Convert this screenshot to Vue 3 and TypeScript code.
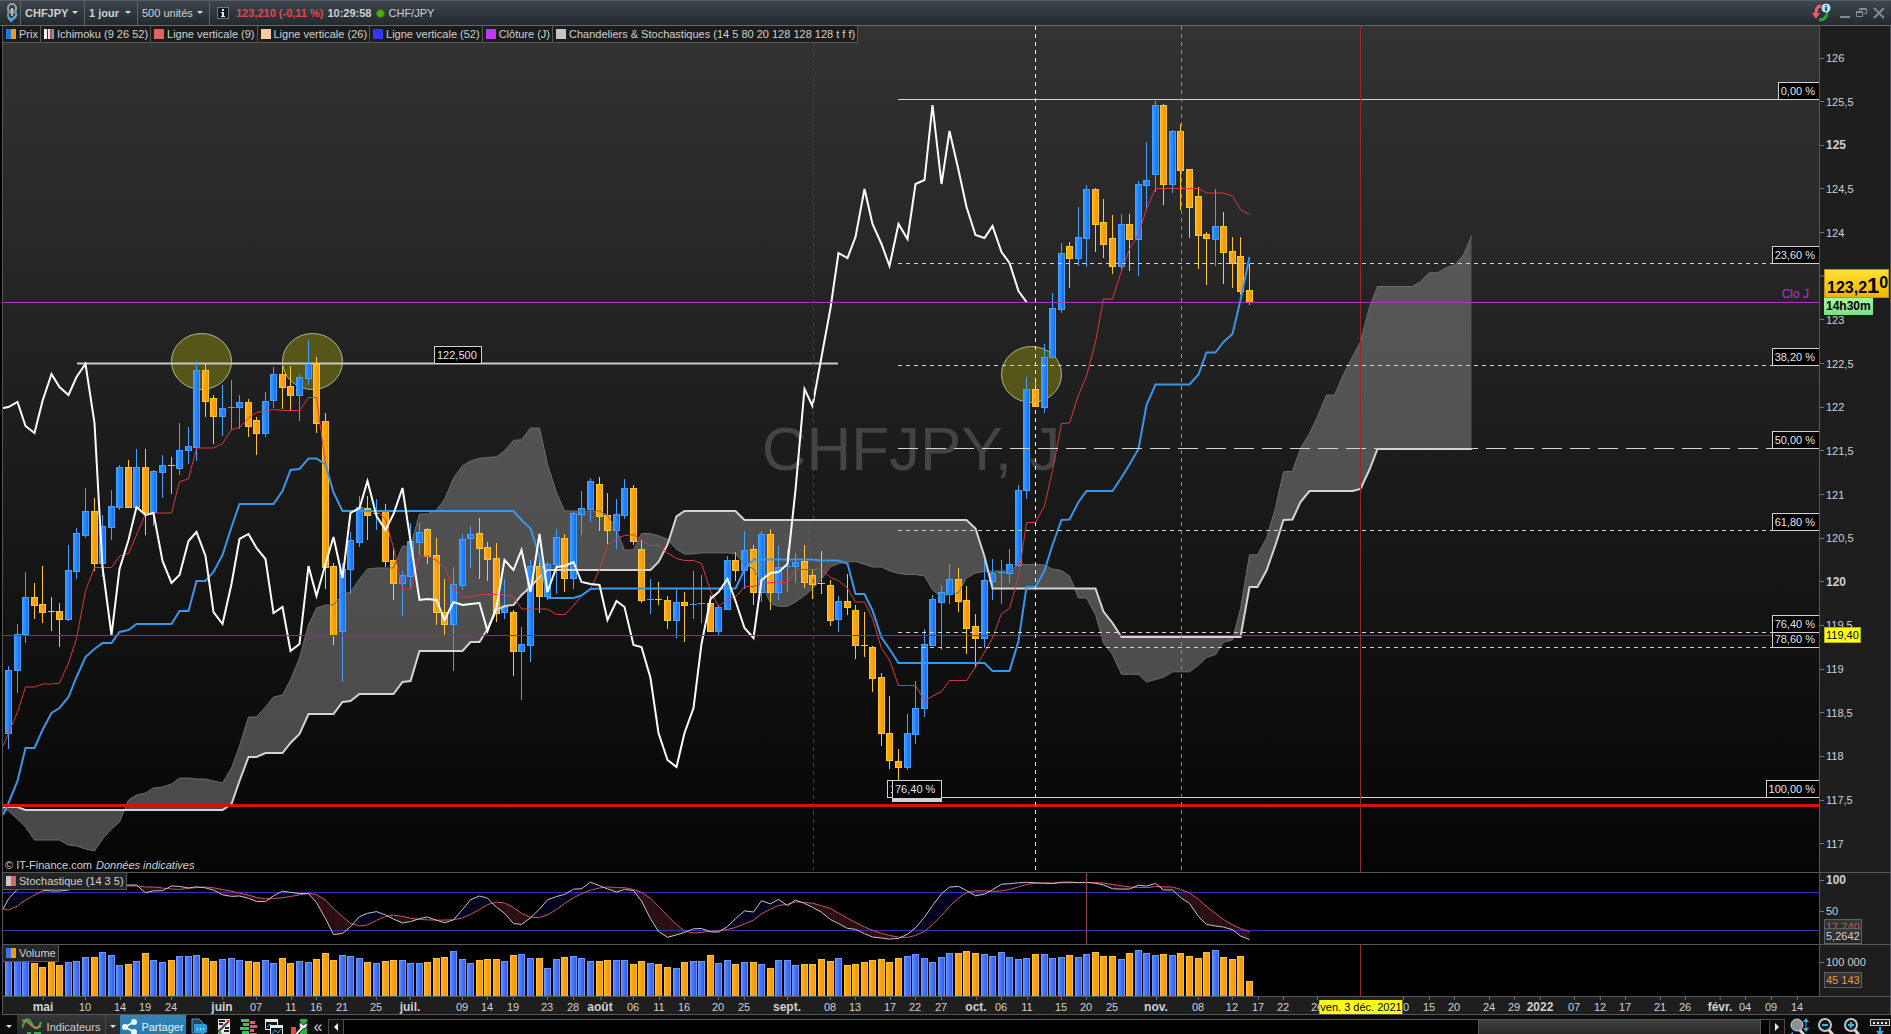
<script setup lang="ts">
type Candle = { x: number; up: boolean; top: number; bottom: number; high: number; low: number }
type Pt = [number, number]

const PITCH = 8.558
const FIRST = 8.5
const slot = (i: number): number => Math.floor(FIRST + PITCH * i) + 0.5

/* One session per entry: direction (1 = up), body top, body bottom, high, low, in canvas units */
const sessions: number[][] = [
  [1,670,733,666,749],[1,634,670,624,693],[1,597,634,572,643],[0,597,605,583,619],[0,604,612,566,623],
  [0,611,613,597,631],[0,611,619,603,647],[1,570,619,545,621],[1,533,571,528,579],[1,511,535,488,538],
  [0,511,563,498,571],[1,526,563,515,577],[1,506,527,490,540],[1,467,507,465,510],[0,467,507,460,507],
  [1,467,507,449,508],[0,467,512,449,535],[1,471,512,470,526],[1,465,472,455,498],[0,465,467,457,494],
  [1,450,468,423,475],[1,446,450,427,464],[1,370,447,361,461],[0,370,401,364,417],[0,398,416,395,444],
  [1,408,416,385,436],[1,407,408,380,430],[1,402,407,395,429],[0,402,426,399,437],[0,420,433,417,455],
  [1,401,433,392,437],[1,374,400,367,408],[0,374,387,366,409],[0,386,395,366,411],[1,377,395,374,421],
  [1,364,378,340,385],[0,364,423,357,433],[0,421,567,413,589],[0,566,635,563,645],[1,569,631,563,682],
  [1,540,569,532,594],[1,507,542,496,547],[0,508,515,496,540],[1,513,515,499,530],[0,511,561,504,567],
  [0,560,583,547,600],[1,575,583,571,616],[1,541,576,523,590],[1,532,542,523,555],[0,529,556,528,564],
  [0,555,612,538,625],[0,612,624,579,636],[1,584,624,567,671],[1,539,585,534,590],[1,534,538,526,568],
  [0,533,548,518,579],[0,547,559,542,581],[0,558,613,543,622],[1,607,612,579,619],[0,612,651,610,676],
  [1,644,651,627,700],[1,566,645,560,662],[0,566,596,557,613],[1,564,596,562,600],[1,537,564,529,594],
  [0,538,578,534,592],[1,513,578,512,589],[1,508,514,491,535],[1,481,509,478,522],[0,484,516,477,531],
  [0,515,530,493,544],[1,514,530,499,549],[1,488,515,479,519],[0,488,541,485,545],[0,549,600,540,603],
  [1,599,600,579,614],[0,599,600,582,605],[0,600,620,596,629],[1,602,620,588,638],[0,602,605,592,642],
  [1,604,605,571,619],[1,603,605,575,623],[0,603,631,595,632],[1,607,631,605,636],[1,560,609,556,610],
  [0,560,570,552,581],[1,550,570,531,589],[0,549,592,545,605],[1,534,592,531,602],[0,534,592,529,610],
  [1,567,592,546,600],[1,566,568,549,592],[1,562,566,553,583],[0,561,582,545,588],[0,575,584,570,599],
  [0,583,585,551,594],[0,585,620,580,626],[1,601,619,596,632],[0,601,607,574,615],[0,610,645,605,659],
  [0,645,647,612,657],[0,647,678,646,692],[0,677,733,673,746],[0,733,760,696,769],[0,761,767,749,797],
  [1,733,767,714,770],[1,708,734,681,744],[1,644,708,629,717],[1,599,645,595,646],[1,592,602,586,650],
  [1,579,594,564,604],[0,579,601,568,612],[0,600,628,586,654],[0,626,638,614,668],[1,580,638,560,648],
  [1,573,581,559,600],[1,572,574,560,604],[1,564,573,549,583],[1,490,565,485,567],[1,389,490,377,499],
  [0,389,406,378,407],[1,357,407,344,413],[1,308,357,293,357],[1,253,309,243,313],[0,246,258,242,288],
  [1,237,258,207,266],[1,189,238,185,267],[0,189,224,188,252],[0,222,244,199,258],[0,238,266,215,274],
  [1,224,266,214,270],[0,224,239,214,271],[1,184,239,181,276],[1,180,185,142,210],[1,105,174,101,192],
  [0,105,184,104,205],[1,131,184,130,193],[0,131,170,124,210],[0,169,207,169,238],[0,196,235,187,269],
  [0,234,238,232,285],[1,226,239,189,266],[0,226,252,212,284],[0,251,263,237,288],[0,256,291,237,295],
  [0,290,302,264,305],
]

const candles: Candle[] = sessions.map((s, i) => ({
  x: slot(i), up: s[0] === 1, top: s[1], bottom: s[2], high: s[3], low: s[4],
}))
const closes = candles.map((c) => (c.up ? c.top : c.bottom))

function middle(i: number, period: number): number {
  const part = candles.slice(i - period + 1, i + 1)
  return (Math.min(...part.map((c) => c.high)) + Math.max(...part.map((c) => c.low))) / 2
}

/* Values that precede the visible sessions are given, the rest is derived */
const tenkanSeed = [733,712,687,687,684,684,683,663]
const kijunSeed = [803,781,748,748,730,713,708,697,677,657,649,643,643,632,630,624,624,624,624,624,611,611,581,581,572]
const spanASeed = [811,819,827,840,840,840,840,845,846,849,851,839,829,822,800,795,793,788,787,784,778,778,779,779,781,783,768,746,717,717,707,697,695,680,658,625,608,605,605,594,592,579,569,568,568,568,546,546,514,514,510]
const spanBSeed = [807,807,810,810,810,810,810,810,810,810,810,810,810,810,810,810,810,810,810,810,810,810,810,810,810,810,804,781,757,757,753,753,753,743,734,714,714,714,714,702,701,694,694,694,694,694,682,681,651,651,651,651,651,651,642,642,629,610,606,605,595,587,577,570,570,570,570,570,570,570,570,570,570,570,570,570,562]

const tenkan = candles.map((_, i) => (i < 8 ? tenkanSeed[i] : middle(i, 9)))
const kijun = candles.map((_, i) => (i < 25 ? kijunSeed[i] : middle(i, 26)))
const SHIFT = 26
const spanA: number[] = []
const spanB: number[] = []
for (let i = 0; i < candles.length + SHIFT; i++) {
  const j = i - SHIFT
  spanA.push(i < 51 ? spanASeed[i] : (tenkan[j] + kijun[j]) / 2)
  spanB.push(i < 77 ? spanBSeed[i] : middle(j, 52))
}

const toPoints = (v: number[], lead?: number): Pt[] => {
  const pts = v.map((y, i): Pt => [slot(i), y])
  return lead === undefined ? pts : [[3, lead], ...pts]
}
const join = (p: Pt[]): string => p.map(([x, y]) => `${x},${y.toFixed(1)}`).join(' ')

const tenkanLine = join(toPoints(tenkan, 746))
const kijunLine = join(toPoints(kijun, 815))
const spanALine = join(toPoints(spanA, 809))
const spanBLine = join(toPoints(spanB, 807))
const cloud = join([...toPoints(spanA, 809), ...toPoints(spanB, 807).reverse()])
const chikouLine = join(toPoints(closes.slice(SHIFT), 408))

/* Stochastic 14 3 5 */
const STO_TOP = 880
const STO_SPAN = 63
const rawK = candles.map((_, i) => {
  const part = candles.slice(Math.max(0, i - 13), i + 1)
  const hi = Math.min(...part.map((c) => c.high))
  const lo = Math.max(...part.map((c) => c.low))
  return (lo - closes[i]) / (lo - hi)
})
const mean = (v: number[]): number => v.reduce((a, b) => a + b, 0) / v.length
const kSeed = [899,889,885,886,890,891,891,890,888,886,885,884,885,885,885,885]
const dSeed = [910,906,900,895,891,889,888,888,888,888,887,886,886,886,886,886,887,887,888,889]
const slowK = candles.map((_, i) => (i < 16 ? kSeed[i] : STO_TOP + STO_SPAN * (1 - mean(rawK.slice(i - 2, i + 1)))))
const slowD = candles.map((_, i) => (i < 20 ? dSeed[i] : mean(slowK.slice(i - 4, i + 1))))
const kLine = join(toPoints(slowK, 909))
const dLine = join(toPoints(slowD, 909))
const stoBands = candles.slice(1).map((_, n) => {
  const i = n + 1
  return {
    up: slowK[i] + slowK[n] < slowD[i] + slowD[n],
    points: join([[slot(n), slowK[n]], [slot(i), slowK[i]], [slot(i), slowD[i]], [slot(n), slowD[n]]]),
  }
})

const volumes: number[] = [
  36,36,35,33,29,34,31,34,35,39,39,44,41,31,32,35,43,36,34,36,40,40,41,38,35,37,38,36,35,34,36,33,38,33,35,34,37,43,36,41,
  40,38,34,33,35,36,36,33,33,34,38,39,45,37,33,36,37,37,35,41,42,38,38,28,37,39,40,38,35,35,36,36,36,32,35,33,32,29,28,34,
  35,35,41,33,36,32,34,34,32,28,36,36,31,32,32,37,35,38,31,32,34,36,37,34,38,40,42,38,34,39,43,43,45,43,42,40,44,39,37,38,
  42,42,38,39,41,39,42,44,40,40,37,43,46,43,41,42,41,43,40,38,44,46,39,37,40,15,
]

const legend = [
  { text: 'Prix', cls: 'sw-price' },
  { text: 'Ichimoku (9 26 52)', cls: 'sw-ichi' },
  { text: 'Ligne verticale (9)', cls: 'sw-red' },
  { text: 'Ligne verticale (26)', cls: 'sw-peach' },
  { text: 'Ligne verticale (52)', cls: 'sw-blue' },
  { text: 'Clôture (J)', cls: 'sw-violet' },
  { text: 'Chandeliers & Stochastiques (14 5 80 20 128 128 128 t f f)', cls: 'sw-grey' },
]

const topOf = (y: number): { top: string } => ({ top: `${((y - 26) / 846) * 100}%` })
const leftOf = (x: number): { left: string } => ({ left: `${((x - 3) / 1816) * 100}%` })
const at = (x: number, y: number) => ({ ...leftOf(x), ...topOf(y) })

const prices = Array.from({ length: 19 }, (_, n) => 126 - n / 2).map((p) => ({
  label: String(p).replace('.', ','),
  y: 58 + (126 - p) * 87.3,
  major: p % 5 === 0,
  hidden: p === 123.5,
}))

const levels = [
  { y: 99.5, label: '0,00 %', dash: '' },
  { y: 263.5, label: '23,60 %', dash: '4 4' },
  { y: 365.5, label: '38,20 %', dash: '4 4' },
  { y: 448.5, label: '50,00 %', dash: '20 8' },
  { y: 530.5, label: '61,80 %', dash: '4 4' },
  { y: 647.5, label: '78,60 %', dash: '4 4' },
  { y: 632.5, label: '76,40 %', dash: '4 4' },
  { y: 797.5, label: '100,00 %', dash: '' },
]

const dates: [string, number][] = [
  ['mai', 43], ['10', 85], ['14', 120], ['19', 145], ['24', 171], ['juin', 222], ['07', 256], ['11', 291], ['16', 316],
  ['21', 342], ['25', 376], ['juil.', 410], ['09', 462], ['14', 487], ['19', 513], ['23', 547], ['28', 573], ['août', 600],
  ['06', 633], ['11', 659], ['16', 684], ['20', 718], ['25', 744], ['sept.', 787], ['08', 830], ['13', 855], ['17', 890],
  ['22', 915], ['27', 941], ['oct.', 976], ['06', 1001], ['11', 1027], ['15', 1061], ['20', 1086], ['25', 1112], ['nov.', 1156],
  ['08', 1198], ['12', 1232], ['17', 1258], ['22', 1283], ['26', 1317], ['10', 1403], ['15', 1429], ['20', 1454], ['24', 1489],
  ['29', 1514], ['2022', 1540], ['07', 1574], ['12', 1600], ['17', 1625], ['21', 1660], ['26', 1685], ['févr.', 1720],
  ['04', 1745], ['09', 1771], ['14', 1797],
]
const isMajor = (t: string): boolean => t.length > 2
</script>

<template>
  <div class="app">
    <header class="toolbar">
      <button class="tool link" aria-label="Lier">
        <svg width="14" height="20" viewBox="0 0 14 20" fill="none">
          <rect x="3" y="1" width="8" height="9" rx="4" stroke="#9aa0a4" stroke-width="2" />
          <rect x="3" y="7" width="8" height="9" rx="4" stroke="#85898c" stroke-width="2" />
          <path d="M7 5v8" stroke="#b8bcbe" stroke-width="2" />
          <path d="M3 14l3 4 6-7" stroke="#3db4e8" stroke-width="2" />
        </svg>
      </button>
      <div class="pick w-symbol strong">
        <select aria-label="Valeur"><option>CHFJPY</option></select>
        <svg width="6" height="4" viewBox="0 0 6 4"><path d="M0 0h6L3 3z" fill="#d5d8da" /></svg>
      </div>
      <div class="pick w-unit strong">
        <select aria-label="Unité de temps"><option>1 jour</option></select>
        <svg width="6" height="4" viewBox="0 0 6 4"><path d="M0 0h6L3 3z" fill="#d5d8da" /></svg>
      </div>
      <div class="pick w-count">
        <select aria-label="Nombre d'unités"><option>500 unités</option></select>
        <svg width="6" height="4" viewBox="0 0 6 4"><path d="M0 0h6L3 3z" fill="#d5d8da" /></svg>
      </div>
      <div class="quote">
        <svg width="12" height="12" viewBox="0 0 12 12">
          <rect x=".5" y=".5" width="11" height="11" fill="#191c1e" stroke="#70767a" />
          <path d="M5 2h2v2H5zM4 5h3v4h1v1H4V9h1V6H4z" fill="#e4e6e7" />
        </svg>
        <strong class="change">123,210 (-0,11 %)</strong>
        <strong>10:29:58</strong>
        <span class="dot"></span>
        <span>CHF/JPY</span>
      </div>
      <div class="window">
        <button class="refresh" aria-label="Actualiser">
          <svg width="20" height="20" viewBox="0 0 20 20" fill="none">
            <path d="M9 3C5 3 4 6 4 10" stroke="#f0636c" stroke-width="3" />
            <path d="M0 10h8l-4 6z" fill="#ee5660" />
            <path d="M7 17c6 0 8-3 8-8" stroke="#2f9e3c" stroke-width="3" />
            <circle cx="14" cy="5" r="4" fill="#a9d8f5" stroke="#dff2fd" />
            <path d="M14 2v1M14 4v4" stroke="#1b5d93" stroke-width="2" />
          </svg>
        </button>
        <button aria-label="Réduire">
          <svg width="10" height="12" viewBox="0 0 10 12"><path d="M0 9h10v2H0z" fill="#85898c" /></svg>
        </button>
        <button aria-label="Restaurer">
          <svg width="11" height="12" viewBox="0 0 11 12" fill="none" stroke="#85898c" stroke-width="1">
            <path d="M3.500 3.500v-2h7v5h-3M.5 4.500h6v5h-6zM.5 5.500h6M3.500 2.500h7" />
          </svg>
        </button>
        <button aria-label="Fermer">
          <svg width="12" height="12" viewBox="0 0 12 12"><path d="M1 1l10 10M11 1L1 11" stroke="#85898c" stroke-width="2" /></svg>
        </button>
      </div>
    </header>

    <main class="board">
      <section class="pane">
        <div class="plot price-plot">
          <div class="watermark">CHFJPY, J</div>
          <svg class="chart" viewBox="3 26 1816 846" preserveAspectRatio="none">
            <defs>
              <linearGradient id="up"><stop offset="0" stop-color="#3d9cff" /><stop offset="1" stop-color="#0f6cf5" /></linearGradient>
              <linearGradient id="down"><stop offset="0" stop-color="#ffae20" /><stop offset="1" stop-color="#f09400" /></linearGradient>
            </defs>
            <polygon :points="cloud" fill="#808080" fill-opacity=".55" />
            <g class="marks">
              <ellipse cx="201.5" cy="361.5" rx="30" ry="28" />
              <ellipse cx="312.5" cy="361.5" rx="30" ry="28" />
              <ellipse cx="1031.5" cy="374.5" rx="30" ry="28" />
            </g>
            <path d="M77 363.500H838" stroke="#c8c8c4" stroke-width="2" />
            <g shape-rendering="crispEdges">
              <g v-for="(c, i) in candles" :key="i" :class="c.up ? 'up' : 'down'">
                <path :d="`M${c.x} ${c.high}V${c.low}`" />
                <rect v-if="c.bottom - c.top > 2" :x="c.x - 3" :y="c.top + 0.5" width="6" :height="c.bottom - c.top" />
                <path v-else :d="`M${c.x - 3.5} ${c.top + 0.5}h7`" />
              </g>
            </g>
            <polyline :points="spanALine" fill="none" stroke="#6c6c6c" />
            <polyline :points="spanBLine" fill="none" stroke="#d4d4d4" stroke-width="2" />
            <polyline :points="tenkanLine" fill="none" stroke="#d8383e" />
            <polyline :points="kijunLine" fill="none" stroke="#3b96ea" stroke-width="2" />
            <polyline :points="chikouLine" fill="none" stroke="#fff" stroke-width="2" />
            <path
              v-for="l in levels" :key="l.label" :d="`M898 ${l.y}H1819`" stroke="#d2d2d2"
              :stroke-dasharray="l.dash || undefined"
            />
            <path d="M3 635.500H1819" stroke="#9c3434" />
            <path d="M3 302.500H1819" stroke="#a63cc0" />
            <path d="M3 805.500H1819" stroke="#dc0f0f" stroke-width="3" />
            <g stroke-dasharray="4 4">
              <path d="M813.500 43V870" stroke="#3a30d0" />
              <path d="M1035.500 26V870" stroke="#ffe8b8" />
              <path d="M1181.500 26V870" stroke="#c87860" />
            </g>
            <path d="M1360.500 26V872" stroke="#8a2e2e" />
          </svg>
          <ul class="legend">
            <li v-for="l in legend" :key="l.text"><i :class="l.cls"></i>{{ l.text }}</li>
          </ul>
          <span v-for="l in levels" :key="l.label" class="level right" :style="topOf(l.y + 0.5)">{{ l.label }}</span>
          <span class="level" :style="at(434, 364)">122,500</span>
          <span class="level" :style="at(887, 798)">117,450</span>
          <span class="level base" :style="at(892, 802)">76,40 %</span>
          <span class="close-label" :style="topOf(301)">Clo J</span>
          <p class="credit">© IT-Finance.com <em>Données indicatives</em></p>
        </div>
        <div class="axis">
          <span
            v-for="p in prices" :key="p.label" class="tick" :class="{ major: p.major }" :style="topOf(p.y)"
          >{{ p.hidden ? '' : p.label }}</span>
          <div class="last" :style="topOf(269)">
            <strong class="last-price"><span>123,2</span><span class="big">1</span><span class="sup">0</span></strong>
            <strong class="countdown">14h30m</strong>
          </div>
          <span class="cursor-price" :style="topOf(635)">119,40</span>
        </div>
      </section>

      <section class="pane">
        <div class="plot">
          <svg class="chart" viewBox="3 873 1816 71" preserveAspectRatio="none">
            <polygon v-for="(b, i) in stoBands" :key="i" :points="b.points" :fill="b.up ? '#04041f' : '#2c1013'" />
            <path d="M3 892.500H1819M3 930.500H1819" stroke="#3634b4" />
            <polyline :points="dLine" fill="none" stroke="#c85a5c" />
            <polyline :points="kLine" fill="none" stroke="#c4c4c8" />
            <path d="M1086.500 873V944" stroke="#9c3c3c" />
          </svg>
          <span class="title"><i class="sw-sto"></i>Stochastique (14 3 5)</span>
        </div>
        <div class="axis">
          <span class="tick major at-100">100</span>
          <span class="tick at-50">50</span>
          <span class="box box-d">17,740</span>
          <span class="box box-k">5,2642</span>
        </div>
      </section>

      <section class="pane">
        <div class="plot">
          <svg class="chart" viewBox="3 945 1816 51" preserveAspectRatio="none">
            <defs>
              <linearGradient id="volUp"><stop offset="0" stop-color="#5c8cff" /><stop offset="1" stop-color="#2c58e8" /></linearGradient>
            </defs>
            <g shape-rendering="crispEdges">
              <g v-for="(v, i) in volumes" :key="i" :class="candles[i].up ? 'vol-up' : 'vol-down'">
                <rect :x="slot(i) - 3" :y="996.5 - v" width="6" :height="v" />
              </g>
            </g>
            <path d="M1360.500 945V996" stroke="#8a2e2e" />
          </svg>
          <span class="title"><i class="sw-vol"></i>Volume</span>
        </div>
        <div class="axis">
          <span class="tick at-vol">100 000</span>
          <span class="box box-v">45 143</span>
        </div>
      </section>

      <section class="dates">
        <div class="date-strip">
          <span
            v-for="([t, x], i) in dates" :key="i" class="date" :class="{ major: isMajor(t) }" :style="leftOf(x)"
          >{{ t }}</span>
          <span class="cursor-date" :style="leftOf(1361)">ven. 3 déc. 2021</span>
        </div>
      </section>
    </main>

    <footer class="bottom">
      <button class="mini" aria-label="Menu">
        <svg width="6" height="4" viewBox="0 0 6 4"><path d="M0 0h6L3 3z" fill="#e0e0e0" /></svg>
      </button>
      <button class="indicators">
        <svg width="20" height="20" viewBox="0 0 20 20" fill="none">
          <path d="M0 11C4-1 7 1 10 7s6 6 9-2" stroke="#34b44a" stroke-width="2" />
          <path d="M0 4c4-2 6 1 9 4s6 4 10 1" stroke="#c07850" stroke-width="2" />
          <path d="M0 17h5v-2h4v4h3v-4h7v5H0z" fill="#35b04a" />
        </svg>
        Indicateurs
      </button>
      <button class="split" aria-label="Liste des indicateurs">
        <svg width="6" height="4" viewBox="0 0 6 4"><path d="M0 0h6L3 3z" fill="#e0e0e0" /></svg>
      </button>
      <button class="share">
        <svg width="15" height="16" viewBox="0 0 15 16">
          <path d="M12 3L3 8l9 5" fill="none" stroke="#eaf5fb" stroke-width="2" />
          <circle cx="12" cy="3" r="3" fill="#eaf5fb" /><circle cx="3" cy="8" r="3" fill="#eaf5fb" /><circle cx="12" cy="13" r="3" fill="#eaf5fb" />
        </svg>
        Partager
      </button>
      <div class="tools">
        <button aria-label="Commentaires">
          <svg width="18" height="18" viewBox="0 0 18 18">
            <path d="M2 1h7l4 4v10H2z" fill="#23465a" stroke="#5c98bc" />
            <path d="M4 6h11q2 0 2 2v5q0 2-2 2h-1v3l-4-3H6q-2 0-2-2z" fill="#2d9be0" />
            <path d="M7 10h1v2H7zM10 10h1v2h-1zM13 10h1v2h-1z" fill="#d8effc" />
          </svg>
        </button>
        <button aria-label="Ordres">
          <svg width="18" height="18" viewBox="0 0 18 18">
            <path d="M3 1h12v17H3z" fill="#e6e6e6" />
            <path d="M4 3h6M4 6h4M10 10h4M9 13h5" stroke="#222" stroke-width="2" />
            <path d="M3 14L14 3" stroke="#444" stroke-width="2" />
            <path d="M11 2h4l-2 3z" fill="#e23d3d" /><path d="M3 17l2-4 3 4z" fill="#24a13c" />
          </svg>
        </button>
        <button aria-label="Carnet">
          <svg width="18" height="18" viewBox="0 0 18 18">
            <path d="M1 1h8v3H1zM3 5h6v3H3zM0 9h9v3H0zM2 13h7v3H2z" fill="#3cc454" />
            <path d="M10 3h5v3h-5zM10 7h7v3h-7zM10 11h4v3h-4zM10 15h7v3h-7z" fill="#e65a5a" />
          </svg>
        </button>
        <button aria-label="Fenêtres">
          <svg width="18" height="18" viewBox="0 0 18 18">
            <rect x=".5" y="1.500" width="12" height="10" fill="#101418" stroke="#e8e8e8" /><path d="M0 1h13v3H0z" fill="#e8e8e8" />
            <path d="M2 9l3-3 2 2" fill="none" stroke="#35a8dc" />
            <rect x="5.500" y="7.500" width="12" height="10" fill="#101418" stroke="#e8e8e8" /><path d="M5 7h13v3H5z" fill="#e8e8e8" />
            <path d="M7 16l3-4 3 3 3-4" fill="none" stroke="#35a8dc" />
          </svg>
        </button>
        <button aria-label="Réglages">
          <svg width="18" height="18" viewBox="0 0 18 18">
            <path d="M10 1h7v17h-7z" fill="#2fae48" /><path d="M1 9h5v9H1z" fill="#e04a4a" />
            <path d="M3 18l7-8q-2-4 1-6l2 3 2-1 1-2q3 3 0 6l-3 1-7 7z" fill="#e8e8e8" stroke="#333" />
          </svg>
        </button>
      </div>
      <button class="chevrons" aria-label="Replier">«</button>
      <button class="step" aria-label="Défiler à gauche">
        <svg width="4" height="8" viewBox="0 0 4 8"><path d="M4 0v8L0 4z" fill="#f0f0f0" /></svg>
      </button>
      <div class="track"><div class="thumb"></div></div>
      <button class="step" aria-label="Défiler à droite">
        <svg width="4" height="8" viewBox="0 0 4 8"><path d="M0 0v8l4-4z" fill="#f0f0f0" /></svg>
      </button>
      <div class="zooms">
        <button aria-label="Ajuster">
          <svg width="20" height="18" viewBox="0 0 20 18">
            <path d="M9 11l6 7" stroke="#d8d8d8" stroke-width="3" /><circle cx="7" cy="7" r="6" fill="#8c9296" stroke="#d0d4d6" />
            <path d="M16 3v9" stroke="#3db4e0" stroke-width="1" /><path d="M13 4l3-4 3 4zM13 10h6l-3 4zM0 16l3-2v4z" fill="#3db4e0" />
          </svg>
        </button>
        <button aria-label="Zoom arrière">
          <svg width="18" height="18" viewBox="0 0 18 18">
            <path d="M10 11l6 7" stroke="#d8d8d8" stroke-width="3" /><circle cx="7" cy="7" r="6" fill="#14181a" stroke="#c4c8ca" stroke-width="2" />
            <path d="M4 7h6" stroke="#3db4e0" stroke-width="2" />
          </svg>
        </button>
        <button aria-label="Zoom avant">
          <svg width="18" height="18" viewBox="0 0 18 18">
            <path d="M10 11l6 7" stroke="#d8d8d8" stroke-width="3" /><circle cx="7" cy="7" r="6" fill="#14181a" stroke="#c4c8ca" stroke-width="2" />
            <path d="M4 7h6M7 4v6" stroke="#3db4e0" stroke-width="2" />
          </svg>
        </button>
        <button aria-label="Données">
          <svg width="20" height="18" viewBox="0 0 20 18">
            <rect x=".5" y="1.500" width="19" height="6" fill="#222" stroke="#c8c8c8" />
            <path d="M3 4h2v2H3zM7 4h2v2H7zM11 4h2v2h-2zM15 4h2v2h-2z" fill="#e8e8e8" />
            <path d="M9 9h2v4h3l-4 5-4-5h3z" fill="#35a8dc" />
          </svg>
        </button>
      </div>
    </footer>
  </div>
</template>

<style>
body {
  background: #000;
}
</style>

<style scoped>
.app {
  display: flex;
  flex-direction: column;
  height: 100vh;
  overflow: hidden;
  background: #060606;
  color: #d0d0d0;
  font: 11px/14px "Liberation Sans", Arial, sans-serif;
}
.app *,
.app *::before {
  box-sizing: border-box;
}
button,
select {
  margin: 0;
  padding: 0;
  border: 0;
  background: none;
  color: inherit;
  font: inherit;
}
button {
  display: flex;
  align-items: center;
  justify-content: center;
}

.toolbar {
  display: flex;
  flex: none;
  height: 26px;
  border-top: 1px solid #555e64;
  border-bottom: 1px solid #666a6c;
  background: linear-gradient(#3c464e, #242a2e);
}
.tool {
  width: 21px;
  border-right: 1px solid #5c6468;
}
.link {
  padding-left: 4px;
}
.pick {
  position: relative;
  display: flex;
  align-items: center;
  border-right: 1px solid #5c6468;
}
.pick select {
  width: 100%;
  padding-left: 4px;
  appearance: none;
}
.pick svg {
  position: absolute;
  right: 6px;
  pointer-events: none;
}
.strong {
  font-weight: bold;
}
.w-symbol {
  width: 64px;
}
.w-unit {
  width: 53px;
}
.w-count {
  width: 72px;
}
.quote {
  display: flex;
  flex: 1;
  align-items: center;
  gap: 4px;
  padding-left: 7px;
}
.change {
  padding-left: 3px;
  color: #e0484e;
}
.dot {
  width: 9px;
  height: 9px;
  border-radius: 50%;
  background: #4fae12;
  border: 1px solid #2c6a0c;
}
.window {
  display: flex;
  align-items: center;
  gap: 6px;
  padding-right: 6px;
}
.refresh {
  padding-right: 2px;
}

.board {
  display: grid;
  flex: 1;
  grid-template-rows: 847fr 72fr 52fr 18px;
  min-height: 0;
  padding-left: 2px;
  background: #000;
}
.pane {
  display: flex;
  min-height: 0;
  border-bottom: 1px solid #54585a;
  border-left: 1px solid #54585a;
}
.plot {
  position: relative;
  flex: 1;
  min-width: 0;
  overflow: hidden;
}
.price-plot {
  background: linear-gradient(#333, #050505);
}
.chart {
  position: absolute;
  inset: 0;
  width: 100%;
  height: 100%;
}
.watermark {
  position: absolute;
  inset: 0;
  display: flex;
  align-items: center;
  justify-content: center;
  color: #444;
  font-size: 62px;
  line-height: 60px;
}
.marks ellipse {
  fill: #8c8c10;
  fill-opacity: 0.5;
  stroke: #b4b494;
}
.up {
  fill: url(#up);
  stroke: #45a0ff;
}
.down {
  fill: url(#down);
  stroke: #ffc632;
}
.vol-up {
  fill: url(#volUp);
  stroke: #6c98ff;
}
.vol-down {
  fill: url(#down);
  stroke: #ffc040;
}

.legend {
  position: absolute;
  top: 0;
  left: 0;
  display: flex;
  margin: 0;
  padding: 0;
  list-style: none;
}
.legend li,
.title {
  display: flex;
  align-items: center;
  gap: 3px;
  height: 17px;
  padding: 0 2px 0 3px;
  border-right: 1px solid #54585a;
  border-bottom: 1px solid #54585a;
  background: #1c1c1c;
  white-space: nowrap;
}
.title {
  position: absolute;
  top: 0;
  left: 0;
  background: #242424;
}
.legend i,
.title i {
  width: 10px;
  height: 10px;
}
.sw-price {
  background: linear-gradient(90deg, #1c78f0 50%, #f09c10 50%);
}
.sw-ichi {
  background: linear-gradient(90deg, #f4f4f4 30%, #333 30% 40%, #e8e8e8 40% 60%, #d84040 60% 80%, #6a9cd8 80%);
}
.sw-red {
  background: #e06464;
}
.sw-peach {
  background: #ffca98;
}
.sw-blue {
  background: #3434ff;
}
.sw-violet {
  background: #c434ff;
}
.sw-grey {
  background: #c4c4c4;
}
.sw-sto {
  background: linear-gradient(90deg, #c8c8c8 50%, #e06464 50%);
}
.sw-vol {
  background: linear-gradient(90deg, #4070ff 50%, #f09c10 50%);
}

.level {
  position: absolute;
  height: 18px;
  padding: 1px 4px 1px 2px;
  transform: translateY(-100%);
  border: 1px solid #d2d2d2;
  background: #000;
  color: #e4e4e4;
  white-space: nowrap;
}
.right {
  right: 0;
  border-right: 0;
}
.base {
  height: 22px;
  padding-right: 6px;
  border-bottom-width: 4px;
}
.close-label {
  position: absolute;
  right: 10px;
  transform: translateY(-100%);
  color: #b03cd4;
  font-size: 12px;
}
.credit {
  position: absolute;
  bottom: 0;
  left: 2px;
  margin: 0;
}
.credit em {
  padding-left: 1px;
}

.axis {
  position: relative;
  flex: none;
  width: 72px;
  border-right: 1px solid #54585a;
  border-left: 1px solid #54585a;
  background: #1e1e1e;
}
.tick {
  position: absolute;
  left: 0;
  display: flex;
  align-items: center;
  gap: 2px;
  transform: translateY(-50%);
  white-space: nowrap;
}
.tick::before {
  width: 4px;
  height: 1px;
  background: #707476;
  content: "";
}
.major {
  font-size: 12px;
  font-weight: bold;
}
.last {
  position: absolute;
  right: 1px;
  left: 4px;
}
.last-price {
  display: flex;
  align-items: baseline;
  height: 29px;
  padding: 0 2px;
  border: 1px solid #b89410;
  background: linear-gradient(#ffe234, #f2b400);
  color: #000;
  font-size: 16px;
  line-height: 32px;
}
.big {
  font-size: 22px;
}
.sup {
  align-self: flex-start;
  line-height: 26px;
}
.countdown {
  display: inline-block;
  height: 17px;
  padding: 1px 2px;
  background: linear-gradient(#a8f4a8, #80dc84);
  color: #000;
  font-size: 12px;
}
.cursor-price {
  position: absolute;
  left: 4px;
  padding: 0 1px;
  transform: translateY(-50%);
  border: 1px solid #b0b020;
  background: #ffff14;
  color: #000;
}
.box {
  position: absolute;
  left: 4px;
  height: 16px;
  padding: 0 1px;
  border: 1px solid #5c6062;
  background: linear-gradient(#3a3a3a, #242424);
}
.box-d {
  bottom: 9px;
  color: #c85a5c;
}
.box-k {
  bottom: 0;
}
.box-v {
  bottom: 8px;
  color: #e8a020;
}
.at-100 {
  top: 10%;
}
.at-50 {
  top: 54%;
}
.at-vol {
  top: 34%;
}

.dates {
  border-right: 1px solid #54585a;
  border-bottom: 1px solid #54585a;
  border-left: 1px solid #54585a;
  background: #1e1e1e;
}
.date-strip {
  position: relative;
  height: 17px;
  margin-right: 71px;
}
.date,
.cursor-date {
  position: absolute;
  top: 3px;
  transform: translateX(-50%);
  white-space: nowrap;
}
.date::before {
  position: absolute;
  top: -3px;
  left: 50%;
  width: 1px;
  height: 3px;
  background: #707476;
  content: "";
}
.cursor-date {
  padding: 0 1px;
  background: #ffff14;
  color: #000;
}

.bottom {
  display: flex;
  flex: none;
  align-items: flex-start;
  height: 19px;
  overflow: hidden;
  background: #0c0c0c;
}
.bottom button {
  flex: none;
  height: 24px;
}
.mini {
  width: 17px;
}
.indicators {
  gap: 5px;
  width: 88px;
  background: linear-gradient(#363636, #242424);
}
.split {
  width: 15px;
  border-left: 1px solid #4c4c4c;
  background: linear-gradient(#363636, #242424);
}
.share {
  gap: 4px;
  width: 66px;
  background: linear-gradient(#3486b8, #2476a8);
  color: #e8f2f8;
}
.tools {
  display: flex;
  gap: 7px;
  padding: 3px 0 0 4px;
}
.chevrons {
  width: 20px;
  font-size: 16px;
}
.bottom .step {
  width: 16px;
  height: 19px;
  margin-top: 4px;
  padding-bottom: 3px;
  border: 1px solid #4c4c4c;
  background: #111;
}
.track {
  display: flex;
  flex: 1;
  justify-content: flex-end;
  height: 19px;
  margin-top: 4px;
  padding-right: 8px;
  border-top: 1px solid #54585a;
  background: #000;
}
.thumb {
  width: 20%;
  border-right: 1px solid #54585a;
  border-left: 1px solid #54585a;
  background: linear-gradient(#404040, #242424);
}
.zooms {
  display: flex;
  gap: 8px;
  padding: 3px 1px 0 5px;
}
.bottom .zooms button,
.bottom .tools button {
  height: 18px;
}
</style>
